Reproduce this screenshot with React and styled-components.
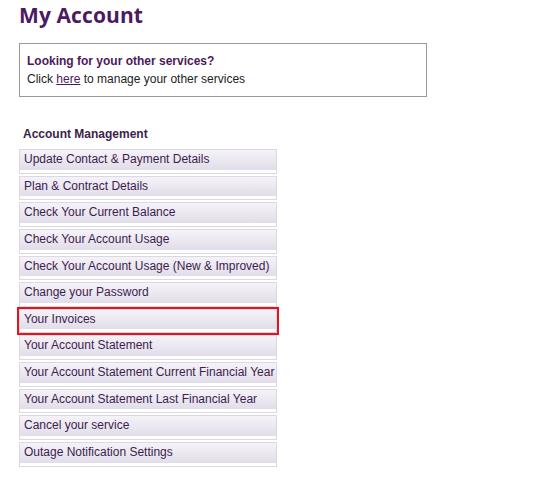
import React from 'react'
import styled, { createGlobalStyle } from 'styled-components'

const GlobalStyle = createGlobalStyle`
  body {
    margin: 0;
    background: #ffffff;
    font-family: "Liberation Sans", Arial, sans-serif;
  }
`

const Page = styled.div`
  width: 554px;
  height: 477px;
  padding: 0 0 0 19px;
  box-sizing: border-box;
  overflow: hidden;
`

const Title = styled.h1`
  margin: 0;
  padding-top: 1px;
  font-family: "Open Sans", sans-serif;
  font-weight: 700;
  font-size: 21px;
  line-height: 28px;
  color: #4b1a61;
  letter-spacing: 0.1px;
`

const ServicesBox = styled.div`
  width: 408px;
  height: 54px;
  margin-top: 14px;
  box-sizing: border-box;
  border: 1px solid #9a9a9a;
  padding: 8px 0 0 7px;
  font-size: 12px;
  line-height: 18px;
  color: #222222;
`

const BoxHeading = styled.div`
  font-weight: 700;
  color: #4b1a5a;
`

const Link = styled.a`
  color: #4b1a5a;
  text-decoration: underline;
`

const Section = styled.div`
  margin-top: 30px;
  width: 258px;
`

const SectionTitle = styled.div`
  padding-left: 4px;
  font-size: 12px;
  font-weight: 700;
  line-height: 15px;
  color: #3b1f4a;
  margin-bottom: 7px;
`

const MenuList = styled.ul`
  list-style: none;
  margin: 0;
  padding: 0;
  display: flex;
  flex-direction: column;
  gap: 2px;
`

const MenuItem = styled.li`
  position: relative;
  height: 24.64px;
  box-sizing: border-box;
  border: 1px solid #dcd8e3;
  padding-bottom: 3px;
  background: #ffffff;
  outline: ${p => (p.$active ? '2.5px solid #e8121c' : 'none')};
  outline-offset: 0;
`

const MenuLink = styled.a`
  display: block;
  height: 100%;
  padding-left: 4px;
  font-size: 12px;
  line-height: 19px;
  color: #3d1d50;
  text-decoration: none;
  white-space: nowrap;
  background: linear-gradient(#f5f3f8, #e1dde9);
`

const items = [
  'Update Contact & Payment Details',
  'Plan & Contract Details',
  'Check Your Current Balance',
  'Check Your Account Usage',
  'Check Your Account Usage (New & Improved)',
  'Change your Password',
  'Your Invoices',
  'Your Account Statement',
  'Your Account Statement Current Financial Year',
  'Your Account Statement Last Financial Year',
  'Cancel your service',
  'Outage Notification Settings'
]

const App = () => {
  return (
    <Page>
      <GlobalStyle />
      <Title>My Account</Title>
      <ServicesBox>
        <BoxHeading>Looking for your other services?</BoxHeading>
        <div>
          Click <Link href="#">here</Link> to manage your other services
        </div>
      </ServicesBox>
      <Section>
        <SectionTitle>Account Management</SectionTitle>
        <MenuList>
          {items.map((name, i) => (
            <MenuItem key={i} $active={name === 'Your Invoices'}>
              <MenuLink href="#">{name}</MenuLink>
            </MenuItem>
          ))}
        </MenuList>
      </Section>
    </Page>
  )
}

export default App
